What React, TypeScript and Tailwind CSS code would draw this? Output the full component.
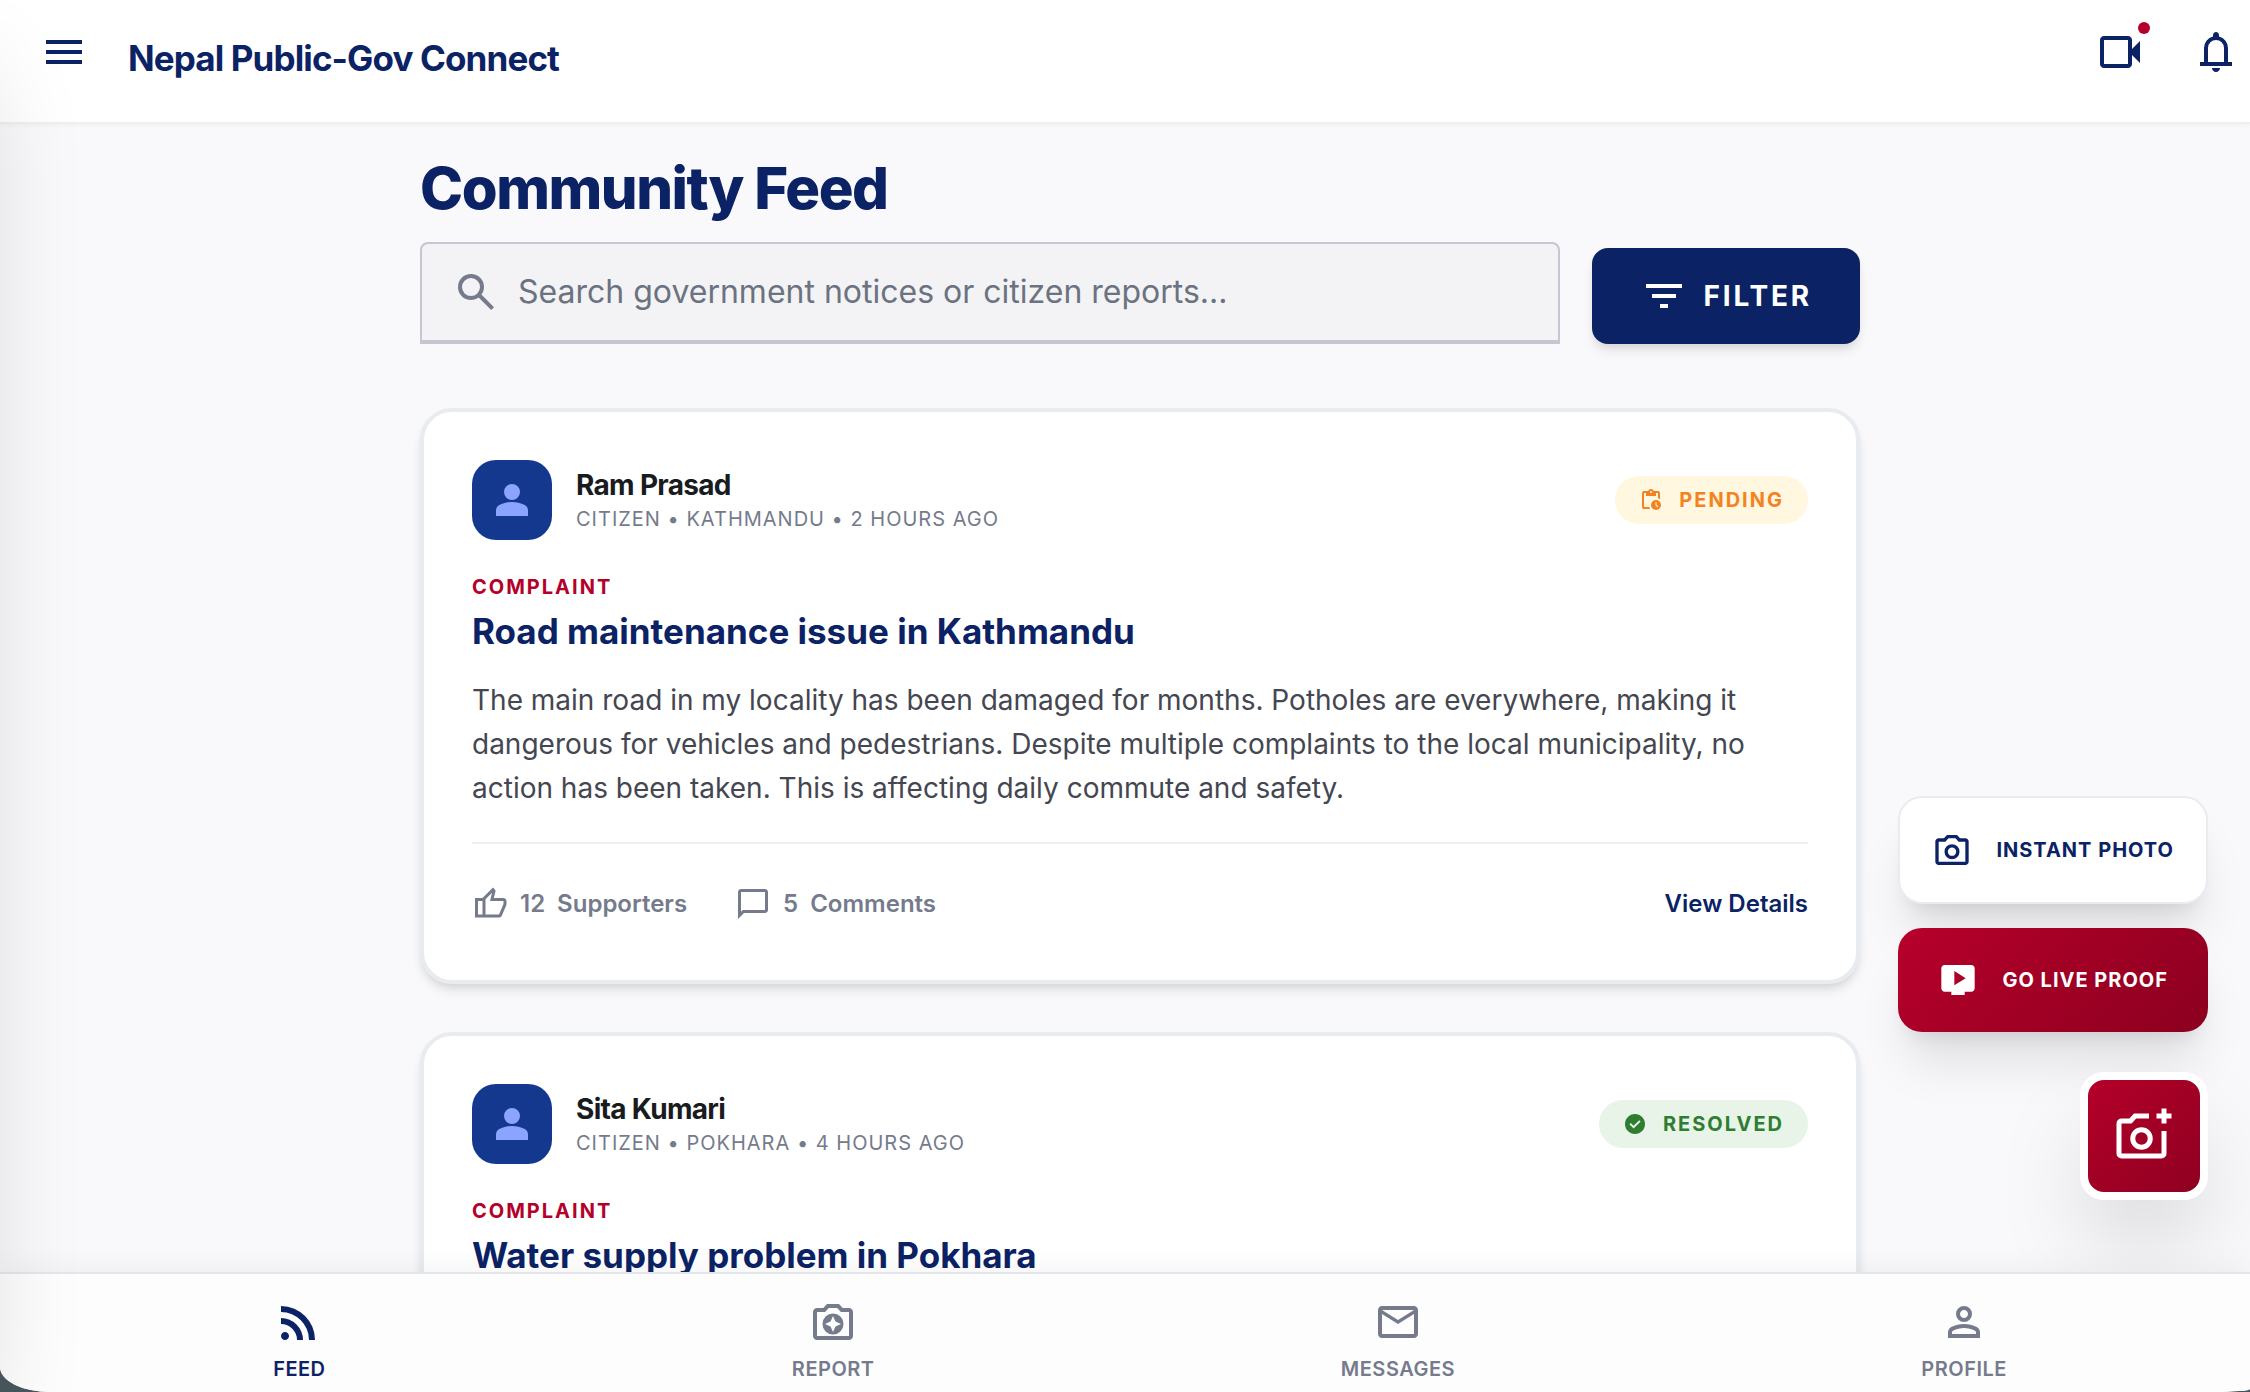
import React, { useState } from "react";

interface Post {
  id: number;
  author: string;
  meta: string;
  status: "PENDING" | "RESOLVED";
  category: string;
  title: string;
  body?: string;
  supporters?: number;
  comments?: number;
}

const posts: Post[] = [
  {
    id: 1,
    author: "Ram Prasad",
    meta: "CITIZEN • KATHMANDU • 2 HOURS AGO",
    status: "PENDING",
    category: "COMPLAINT",
    title: "Road maintenance issue in Kathmandu",
    body: "The main road in my locality has been damaged for months. Potholes are everywhere, making it dangerous for vehicles and pedestrians. Despite multiple complaints to the local municipality, no action has been taken. This is affecting daily commute and safety.",
    supporters: 12,
    comments: 5,
  },
  {
    id: 2,
    author: "Sita Kumari",
    meta: "CITIZEN • POKHARA • 4 HOURS AGO",
    status: "RESOLVED",
    category: "COMPLAINT",
    title: "Water supply problem in Pokhara",
  },
];

// Material Symbols outlines, all drawn on the 960 grid
const icons = {
  menu: "M120-240v-80h720v80H120Zm0-200v-80h720v80H120Zm0-200v-80h720v80H120Z",
  video: "M160-160q-33 0-56.500-23.500T80-240v-480q0-33 23.500-56.500T160-800h480q33 0 56.500 23.500T720-720v180l160-160v440L720-420v180q0 33-23.500 56.500T640-160H160Zm0-80h480v-480H160v480Z",
  bell: "M160-200v-80h80v-280q0-83 50-147.500T420-792v-28q0-25 17.500-42.500T480-880q25 0 42.500 17.500T540-820v28q80 20 130 84.500T720-560v280h80v80H160ZM480-80q-33 0-56.500-23.500T400-160h160q0 33-23.500 56.500T480-80ZM320-280h320v-280q0-66-47-113t-113-47q-66 0-113 47t-47 113v280Z",
  search: "M784-120 532-372q-30 24-69 38t-83 14q-109 0-184.500-75.500T120-580q0-109 75.500-184.500T380-840q109 0 184.500 75.500T640-580q0 44-14 83t-38 69l252 252-56 56ZM380-400q75 0 127.500-52.500T560-580q0-75-52.500-127.500T380-760q-75 0-127.500 52.500T200-580q0 75 52.500 127.500T380-400Z",
  filter: "M400-240v-80h160v80H400ZM240-440v-80h480v80H240ZM120-640v-80h720v80H120Z",
  person: "M480-480q-66 0-113-47t-47-113q0-66 47-113t113-47q66 0 113 47t47 113q0 66-47 113t-113 47ZM160-160v-112q0-34 17.500-62.500T224-378q62-31 126-46.500T480-440q66 0 130 15.500T736-378q29 15 46.500 43.500T800-272v112H160Z",
  pending: "M680-80q-83 0-141.500-58.500T480-280q0-83 58.500-141.500T680-480q83 0 141.500 58.500T880-280q0 83-58.500 141.500T680-80Zm67-105 28-28-75-75v-112h-40v128l87 87Zm-547 65q-33 0-56.500-23.500T120-200v-560q0-33 23.500-56.500T200-840h167q11-35 43-57.500t70-22.500q40 0 71.500 22.500T594-840h166q33 0 56.500 23.500T840-760v250q-18-13-38-22t-42-16v-212h-80v120H280v-120h-80v560h212q7 22 16 42t22 38H200Zm280-640q17 0 28.500-11.500T520-800q0-17-11.500-28.500T480-840q-17 0-28.500 11.500T440-800q0 17 11.500 28.500T480-760Z",
  check: "m424-296 282-282-56-56-226 226-114-114-56 56 170 170Zm56 216q-83 0-156-31.500T197-197q-54-54-85.500-127T80-480q0-83 31.500-156T197-763q54-54 127-85.500T480-880q83 0 156 31.500T763-763q54 54 85.500 127T880-480q0 83-31.500 156T763-197q-54 54-127 85.500T480-80Z",
  thumb: "M720-120H280v-520l280-280 50 50q7 7 11.500 19t4.500 23v14l-44 174h258q32 0 56 24t24 56v80q0 7-2 15t-4 15L794-168q-9 20-30 34t-44 14Zm-360-80h360l120-280v-80H480l54-220-174 174v406Zm0-406v406-406Zm-80-34v80H160v360h120v80H80v-520h200Z",
  comment: "M80-80v-720q0-33 23.500-56.500T160-880h640q33 0 56.500 23.500T880-800v480q0 33-23.500 56.500T800-240H240L80-80Zm126-240h594v-480H160v525l46-45Zm-46 0v-480 480Z",
  camera: "M480-260q75 0 127.500-52.500T660-440q0-75-52.500-127.500T480-620q-75 0-127.500 52.500T300-440q0 75 52.500 127.500T480-260Zm0-80q-42 0-71-29t-29-71q0-42 29-71t71-29q42 0 71 29t29 71q0 42-29 71t-71 29ZM160-120q-33 0-56.500-23.500T80-200v-480q0-33 23.500-56.500T160-760h126l74-80h240l74 80h126q33 0 56.500 23.500T880-680v480q0 33-23.500 56.500T800-120H160Zm0-80h640v-480H638l-73-80H395l-73 80H160v480Z",
  live: "m392-352 272-172-272-172v344Zm-72 232v-80H160q-33 0-56.500-23.500T80-280v-480q0-33 23.500-56.500T160-840h640q33 0 56.500 23.500T880-760v480q0 33-23.500 56.500T800-200H640v80H320Z",
  addPhoto: "M120-120q-33 0-56.500-23.500T40-200v-480q0-33 23.500-56.500T120-760h126l74-80h240v80H355l-73 80H120v480h640v-360h80v360q0 33-23.500 56.500T760-120H120Zm640-560v-80h-80v-80h80v-80h80v80h80v80h-80v80h-80ZM440-260q75 0 127.500-52.500T620-440q0-75-52.500-127.500T440-620q-75 0-127.500 52.500T260-440q0 75 52.500 127.500T440-260Zm0-80q-42 0-71-29t-29-71q0-42 29-71t71-29q42 0 71 29t29 71q0 42-29 71t-71 29Z",
  feed: "M200-120q-33 0-56.500-23.500T120-200q0-33 23.500-56.500T200-280q33 0 56.500 23.500T280-200q0 33-23.500 56.500T200-120Zm480 0q0-117-44-218.500T516-516q-76-76-177.500-120T120-680v-120q142 0 265 53t216 146q93 93 146 216t53 265H680Zm-240 0q0-67-25-124.500T346-346q-44-44-101.500-69T120-440v-120q92 0 171.500 34.500T431-431q60 60 94.500 139.500T560-120H440Z",
  report: "m480-280 50-110 110-50-110-50-50-110-50 110-110 50 110 50 50 110Zm0 50q-87 0-148.500-61.500T270-440q0-87 61.500-148.500T480-650q87 0 148.500 61.500T690-440q0 87-61.500 148.500T480-230ZM160-120q-33 0-56.500-23.500T80-200v-480q0-33 23.500-56.500T160-760h126l74-80h240l74 80h126q33 0 56.500 23.500T880-680v480q0 33-23.500 56.500T800-120H160Zm0-80h640v-480H638l-73-80H395l-73 80H160v480Z",
  mail: "M160-160q-33 0-56.500-23.500T80-240v-480q0-33 23.500-56.500T160-800h640q33 0 56.500 23.500T880-720v480q0 33-23.500 56.500T800-160H160Zm320-280L160-640v400h640v-400L480-440Zm0-80 320-200H160l320 200ZM160-640v-80 480-400Z",
  profile: "M480-480q-66 0-113-47t-47-113q0-66 47-113t113-47q66 0 113 47t47 113q0 66-47 113t-113 47ZM160-160v-112q0-34 17.500-62.500T224-378q62-31 126-46.500T480-440q66 0 130 15.500T736-378q29 15 46.500 43.500T800-272v112H160Zm80-80h480v-32q0-11-5.500-20T700-306q-54-27-109-40.500T480-360q-56 0-111 13.500T260-306q-9 5-14.500 14t-5.500 20v32Zm240-320q33 0 56.500-23.500T560-640q0-33-23.500-56.500T480-720q-33 0-56.500 23.500T400-640q0 33 23.500 56.500T480-560Z",
};

const Icon = ({ name, className }: { name: keyof typeof icons; className: string }) => (
  <svg viewBox="0 -960 960 960" fill="currentColor" aria-hidden="true" className={`shrink-0 ${className}`}>
    <path d={icons[name]} />
  </svg>
);

const StatusBadge = ({ status }: { status: Post["status"] }) => {
  const pending = status === "PENDING";
  return (
    <span
      className={`flex h-12 items-center gap-4 rounded-full px-6 text-xl font-bold tracking-widest ${
        pending ? "bg-[#fff7e0] text-[#f58220]" : "bg-[#e8f4e8] text-[#2e7d32]"
      }`}
    >
      <Icon name={pending ? "pending" : "check"} className="size-6" />
      {status}
    </span>
  );
};

const PostCard = ({ post }: { post: Post }) => (
  <article className="rounded-[32px] border-4 border-[#e8ebf0] bg-white p-12 shadow-[0_8px_12px_-2px_rgba(0,0,0,0.1),0_4px_8px_-4px_rgba(0,0,0,0.1)]">
    <div className="flex items-center justify-between">
      <div className="flex items-center gap-6">
        <div className="flex size-20 items-center justify-center rounded-3xl bg-[#15388f] text-[#8aa4ff]">
          <Icon name="person" className="size-12" />
        </div>
        <div className="pt-0.5">
          <h3 className="text-[28px] leading-9 font-bold tracking-tight text-[#191c1e]">{post.author}</h3>
          <p className="text-xl leading-8 tracking-wider text-[#757b8c]">{post.meta}</p>
        </div>
      </div>
      <StatusBadge status={post.status} />
    </div>

    <p className="mt-[33px] text-xl leading-7 font-bold tracking-widest text-[#b4002a]">{post.category}</p>
    <h2 className="mt-1.5 text-[35px] leading-[48px] font-bold text-[#0b2265]">{post.title}</h2>
    {post.body && <p className="mt-[23px] text-[28px] leading-[44px] text-[#444651]">{post.body}</p>}

    {post.supporters !== undefined && (
      <div className="mt-8 flex items-center justify-between border-t-2 border-[#eceeef] pt-8">
        <div className="flex h-14 items-center gap-12 text-2xl font-semibold text-[#757b8c]">
          <button className="flex items-center gap-3">
            <Icon name="thumb" className="size-9" />
            <span>{post.supporters}</span>
            <span>Supporters</span>
          </button>
          <button className="flex items-center gap-3">
            <Icon name="comment" className="size-9" />
            <span>{post.comments}</span>
            <span>Comments</span>
          </button>
        </div>
        <a href="#details" className="text-2xl font-semibold text-[#0b2265]">View Details</a>
      </div>
    )}
  </article>
);

const tabs: { label: string; icon: keyof typeof icons }[] = [
  { label: "FEED", icon: "feed" },
  { label: "REPORT", icon: "report" },
  { label: "MESSAGES", icon: "mail" },
  { label: "PROFILE", icon: "profile" },
];

const App = () => {
  const [search, setSearch] = useState<string>("");
  const [activeTab, setActiveTab] = useState<string>("FEED");

  const visiblePosts = posts.filter(post => post.title.toLowerCase().includes(search.toLowerCase()));

  return (
    <div className="h-screen bg-[#46545b] font-['Inter',sans-serif]">
      <div className="relative flex h-full flex-col overflow-hidden bg-[#f9f9fb] [border-bottom-left-radius:50px_25px] [border-bottom-right-radius:37px_3px]">
        <header className="z-10 flex h-[124px] shrink-0 items-start justify-between border-b-2 border-[#eeeff1] bg-white pt-7 pr-2.5 pl-10 shadow-[0_2px_4px_rgba(0,0,0,0.03)]">
          <div className="flex items-start gap-10">
            <button aria-label="Menu" className="text-[#0b2265]">
              <Icon name="menu" className="size-12" />
            </button>
            <h1 className="pt-2 text-[35px] leading-[44px] font-bold tracking-tight text-[#0b2265]">Nepal Public-Gov Connect</h1>
          </div>
          <div className="flex items-center gap-12 text-[#0b2265]">
            <button aria-label="Live video" className="relative">
              <Icon name="video" className="size-12" />
              <span className="absolute -top-1.5 -right-1.5 size-3 rounded-full bg-[#b4002a]" />
            </button>
            <button aria-label="Notifications">
              <Icon name="bell" className="size-12" />
            </button>
          </div>
        </header>

        <main className="min-h-0 flex-1 overflow-y-auto pt-8 pr-2.5 pl-10 [scrollbar-width:none]">
          <div className="mx-auto max-w-[1440px]">
            <h2 className="text-[58px] leading-[64px] font-extrabold tracking-tight text-[#0b2265]">Community Feed</h2>

            <div className="mt-[22px] flex items-end gap-8">
              <label className="flex h-[102px] flex-1 items-center gap-[18px] rounded-t-lg border-2 border-b-4 border-[#c5c6d2] bg-[#f3f3f5] px-[30px] text-[#757b8c]">
                <Icon name="search" className="size-12" />
                <input
                  type="text"
                  aria-label="Search posts"
                  value={search}
                  onChange={(e) => setSearch(e.target.value)}
                  placeholder="Search government notices or citizen reports..."
                  className="w-full bg-transparent text-[32px] text-[#191c1e] outline-none placeholder:text-[#6b7280]"
                />
              </label>
              <button className="flex h-24 items-center gap-4 rounded-2xl bg-[#0b2265] px-12 text-[28px] font-bold tracking-widest text-white shadow-[0_8px_12px_-2px_rgba(0,0,0,0.1),0_4px_8px_-4px_rgba(0,0,0,0.1)]">
                <Icon name="filter" className="size-12" />
                FILTER
              </button>
            </div>

            <div className="mt-16 flex flex-col gap-12 pb-12">
              {visiblePosts.map((post) => (
                <PostCard key={post.id} post={post} />
              ))}
            </div>
          </div>
        </main>

        {/* Quick actions float over the feed */}
        <div className="absolute right-[42px] bottom-48 flex flex-col items-end">
          <button className="flex h-[108px] items-center gap-6 rounded-3xl border-2 border-[#e8ebf0] bg-white px-8 text-xl font-bold tracking-wider text-[#0b2265] shadow-[0_40px_50px_-10px_rgba(0,0,0,0.1),0_16px_20px_-12px_rgba(0,0,0,0.1)]">
            <Icon name="camera" className="size-10" />
            INSTANT PHOTO
          </button>
          <button className="mt-6 flex h-[104px] items-center gap-6 rounded-3xl bg-linear-135 from-[#b7002b] to-[#8c001f] px-10 text-xl font-bold tracking-wider text-white shadow-[0_40px_50px_-10px_rgba(0,0,0,0.1),0_16px_20px_-12px_rgba(0,0,0,0.1)]">
            <Icon name="live" className="size-10" />
            GO LIVE PROOF
          </button>
          <button
            aria-label="New photo report"
            className="mt-10 flex size-32 items-center justify-center rounded-3xl border-8 border-white bg-linear-135 from-[#b7002b] to-[#8c001f] bg-origin-border text-white shadow-[0_50px_100px_-24px_rgba(0,0,0,0.25)]"
          >
            <Icon name="addPhoto" className="size-[60px]" />
          </button>
        </div>

        <nav className="z-10 flex h-[120px] shrink-0 justify-around border-t-2 border-[#e3e6ec] bg-[#fdfdfd] pt-6 pr-2.5 pl-10 shadow-[0_-8px_24px_rgba(0,0,0,0.04)]">
          {tabs.map((tab) => (
            <button
              key={tab.label}
              onClick={() => setActiveTab(tab.label)}
              className={`flex flex-col items-center gap-[9px] text-xl font-semibold tracking-wide ${
                activeTab === tab.label ? "text-[#0b2265]" : "text-[#757b8c]"
              }`}
            >
              <Icon name={tab.icon} className="size-12" />
              {tab.label}
            </button>
          ))}
        </nav>

        <div className="pointer-events-none absolute inset-y-0 right-full z-20 w-96 shadow-[0_50px_100px_-24px_rgba(0,0,0,0.16)]" />
      </div>
    </div>
  );
};

export default App;
